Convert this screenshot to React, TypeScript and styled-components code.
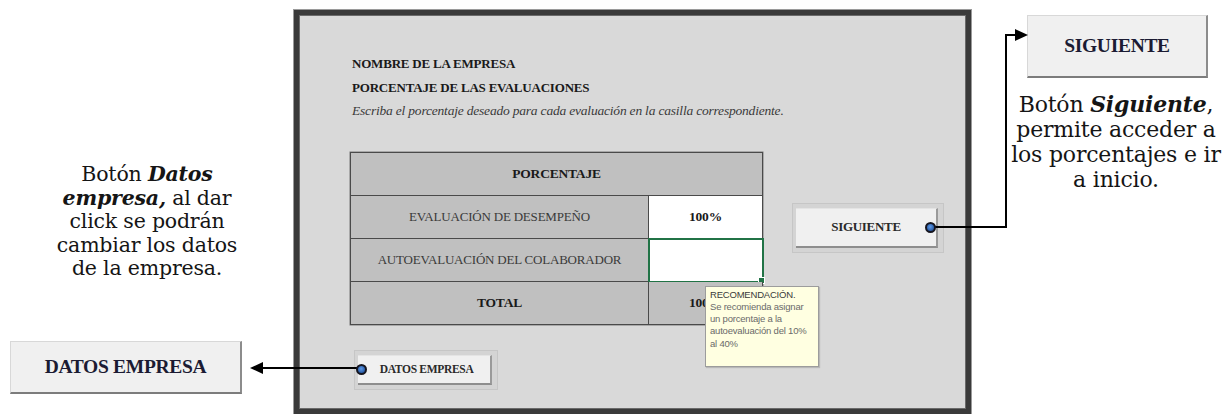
import styled, { createGlobalStyle } from "styled-components";

const GlobalStyle = createGlobalStyle`
  html, body {
    margin: 0;
    padding: 0;
    background: #ffffff;
  }
  body {
    width: 1227px;
    height: 414px;
    overflow: hidden;
  }
`;

const serif = `"Liberation Serif", "Times New Roman", serif`;

const Page = styled.div`
  position: relative;
  display: flex;
  width: 1227px;
  height: 414px;
  font-family: ${serif};
  color: #111;
`;

const LeftColumn = styled.div`
  width: 294px;
  display: flex;
  flex-direction: column;
  padding-top: 163px;
  box-sizing: border-box;
`;

const RightColumn = styled.div`
  flex: 1;
  display: flex;
  flex-direction: column;
  padding-top: 15px;
`;

type NoteProps = { $size: number; $lineHeight: number; $offset: number; $gap: number };

const Note = styled.p<NoteProps>`
  margin: ${({ $gap }) => $gap}px 0 0 ${({ $offset }) => $offset}px;
  width: ${({ $offset }) => ($offset ? "222px" : "100%")};
  font-family: "DejaVu Serif", serif;
  font-size: ${({ $size }) => $size}px;
  line-height: ${({ $lineHeight }) => $lineHeight}px;
  text-align: center;
  white-space: nowrap;
  color: #151515;
  letter-spacing: -0.2px;

  em {
    font-weight: bold;
  }
`;

type BigButtonProps = { $width: number; $height: number; $left: number; $gap: number };

const BigButton = styled.div<BigButtonProps>`
  width: ${({ $width }) => $width}px;
  height: ${({ $height }) => $height}px;
  margin-left: ${({ $left }) => $left}px;
  margin-top: ${({ $gap }) => $gap}px;
  box-sizing: border-box;
  display: flex;
  align-items: center;
  justify-content: center;
  background: #f0f0f0;
  border-top: 1px solid #d8d8d8;
  border-left: 1px solid #d8d8d8;
  border-right: 2px solid #8c8c8c;
  border-bottom: 2px solid #7c7c7c;
  font-family: ${serif};
  font-weight: bold;
  font-size: 19.5px;
  color: #1b1b33;
  letter-spacing: -0.3px;
`;

const Sheet = styled.div`
  position: relative;
  width: 677px;
  height: 404px;
  margin-top: 10px;
  box-sizing: border-box;
  background: #d9d9d9;
  border: 5px solid #3a3a3a;
  outline: 1px solid #9a9a9a;
  box-shadow: inset 0 0 0 1px #6a6a6a;
  padding: 37px 0 0 51px;
`;

const Heading = styled.div<{ $italic?: boolean }>`
  margin-left: 2px;
  font-size: ${({ $italic }) => ($italic ? "13.5px" : "13px")};
  line-height: 23.5px;
  font-weight: ${({ $italic }) => ($italic ? "normal" : "bold")};
  font-style: ${({ $italic }) => ($italic ? "italic" : "normal")};
  color: ${({ $italic }) => ($italic ? "#3a3a3a" : "#1a1a1a")};
  letter-spacing: -0.2px;
`;

const TableRow = styled.div`
  display: flex;
  align-items: flex-start;
  margin-top: 29px;
`;

const TableWrap = styled.div`
  position: relative;
`;

const Grid = styled.div`
  display: grid;
  grid-template-columns: 298px 114px;
  grid-auto-rows: 43px;
  border-top: 1px solid #4a4a4a;
  border-left: 1px solid #4a4a4a;
  box-shadow: 0 0 0 0.5px #777;
`;

type CellProps = { $white?: boolean; $bold?: boolean; $span?: boolean; $selected?: boolean };

const Cell = styled.div<CellProps>`
  position: relative;
  grid-column: ${({ $span }) => ($span ? "1 / 3" : "auto")};
  display: flex;
  align-items: center;
  justify-content: center;
  box-sizing: border-box;
  background: ${({ $white }) => ($white ? "#ffffff" : "#c0c0c0")};
  border-right: 1px solid #4a4a4a;
  border-bottom: 1px solid #4a4a4a;
  font-size: ${({ $bold }) => ($bold ? "13.5px" : "13px")};
  font-weight: ${({ $bold }) => ($bold ? "bold" : "normal")};
  color: ${({ $bold }) => ($bold ? "#1a1a1a" : "#3a3a3a")};
  letter-spacing: -0.2px;
  outline: ${({ $selected }) => ($selected ? "2px solid #217346" : "none")};
  outline-offset: -1px;
`;

const FillHandle = styled.span`
  position: absolute;
  right: -3px;
  bottom: -3px;
  width: 5px;
  height: 5px;
  background: #217346;
  border: 1px solid #ffffff;
`;

const Tooltip = styled.div`
  position: absolute;
  left: 355px;
  top: 134px;
  width: 114px;
  height: 81px;
  box-sizing: border-box;
  padding: 2px 4px;
  background: #ffffe1;
  border: 1px solid #9c9c9c;
  box-shadow: 1px 1px 1px rgba(0, 0, 0, 0.15);
  font-family: "Liberation Sans", Arial, sans-serif;
  font-size: 9.5px;
  line-height: 12.3px;
  letter-spacing: -0.2px;
  color: #6a6a6a;
  z-index: 2;

  strong {
    font-weight: normal;
    color: #3a3a3a;
  }
`;

type ShapeProps = { $width: number; $height: number; $left: number; $top: number };

const ShapeFrame = styled.div<ShapeProps>`
  position: relative;
  width: ${({ $width }) => $width}px;
  height: ${({ $height }) => $height}px;
  margin-left: ${({ $left }) => $left}px;
  margin-top: ${({ $top }) => $top}px;
  box-sizing: border-box;
  padding: 4px 5px 4px 3px;
  background: #d4d4d4;
  border: 1px solid #c6c6c6;
`;

const ShapeButton = styled.div<{ $size: number }>`
  height: 100%;
  box-sizing: border-box;
  display: flex;
  align-items: center;
  justify-content: center;
  background: #f0f0f0;
  border-right: 2px solid #9a9a9a;
  border-bottom: 2px solid #8e8e8e;
  border-top: 1px solid #e4e4e4;
  font-size: ${({ $size }) => $size}px;
  font-weight: bold;
  color: #2a2a2a;
  letter-spacing: -0.3px;
`;

const Dot = styled.span<{ $x: number; $y: number }>`
  position: absolute;
  left: ${({ $x }) => $x}px;
  top: ${({ $y }) => $y}px;
  width: 11px;
  height: 11px;
  box-sizing: border-box;
  border-radius: 50%;
  border: 2px solid #15151f;
  background: radial-gradient(circle at 45% 40%, #5f9ae6 0%, #2f64b0 60%, #1d3f78 100%);
  z-index: 3;
`;

const Connectors = styled.svg`
  position: absolute;
  left: 0;
  top: 0;
  width: 1227px;
  height: 414px;
  pointer-events: none;
  z-index: 1;
`;

export default function App() {
  return (
    <>
      <GlobalStyle />
      <Page>
        <LeftColumn>
          <Note $size={20.5} $lineHeight={23.5} $offset={0} $gap={0}>
            Botón <em>Datos</em>
            <br />
            <em>empresa,</em> al dar
            <br />
            click se podrán
            <br />
            cambiar los datos
            <br />
            de la empresa.
          </Note>
          <BigButton $width={232} $height={53} $left={10} $gap={60}>
            DATOS EMPRESA
          </BigButton>
        </LeftColumn>

        <Sheet>
          <Heading>NOMBRE DE LA EMPRESA</Heading>
          <Heading>PORCENTAJE DE LAS EVALUACIONES</Heading>
          <Heading $italic>
            Escriba el porcentaje deseado para cada evaluación en la casilla correspondiente.
          </Heading>

          <TableRow>
            <TableWrap>
              <Grid>
                <Cell $span $bold>
                  PORCENTAJE
                </Cell>
                <Cell>EVALUACIÓN DE DESEMPEÑO</Cell>
                <Cell $white $bold>
                  100%
                </Cell>
                <Cell>AUTOEVALUACIÓN DEL COLABORADOR</Cell>
                <Cell $white $selected>
                  <FillHandle />
                </Cell>
                <Cell $bold>TOTAL</Cell>
                <Cell $bold>100%</Cell>
              </Grid>
              <Tooltip>
                <strong>RECOMENDACIÓN.</strong>
                <br />
                Se recomienda asignar
                <br />
                un porcentaje a la
                <br />
                autoevaluación del 10%
                <br />
                al 40%
              </Tooltip>
            </TableWrap>

            <ShapeFrame $width={152} $height={50} $left={29} $top={51}>
              <ShapeButton $size={13}>SIGUIENTE</ShapeButton>
              <Dot $x={132} $y={18} />
            </ShapeFrame>
          </TableRow>

          <ShapeFrame $width={144} $height={40} $left={4} $top={25}>
            <ShapeButton $size={11.5}>&nbsp;&nbsp;DATOS EMPRESA</ShapeButton>
            <Dot $x={1} $y={13} />
          </ShapeFrame>
        </Sheet>

        <RightColumn>
          <BigButton $width={181} $height={63} $left={56} $gap={0}>
            SIGUIENTE
          </BigButton>
          <Note $size={22} $lineHeight={25} $offset={34} $gap={14}>
            Botón <em>Siguiente</em>,
            <br />
            permite acceder a
            <br />
            los porcentajes e ir
            <br />a inicio.
          </Note>
        </RightColumn>

        <Connectors viewBox="0 0 1227 414">
          <path d="M934 227 H1006 V35 H1016" fill="none" stroke="#000" strokeWidth="2" />
          <polygon points="1015,29 1028,35 1015,41" fill="#000" />
          <path d="M358 368 H262" fill="none" stroke="#000" strokeWidth="2" />
          <polygon points="263,362 250,368 263,374" fill="#000" />
        </Connectors>
      </Page>
    </>
  );
}
